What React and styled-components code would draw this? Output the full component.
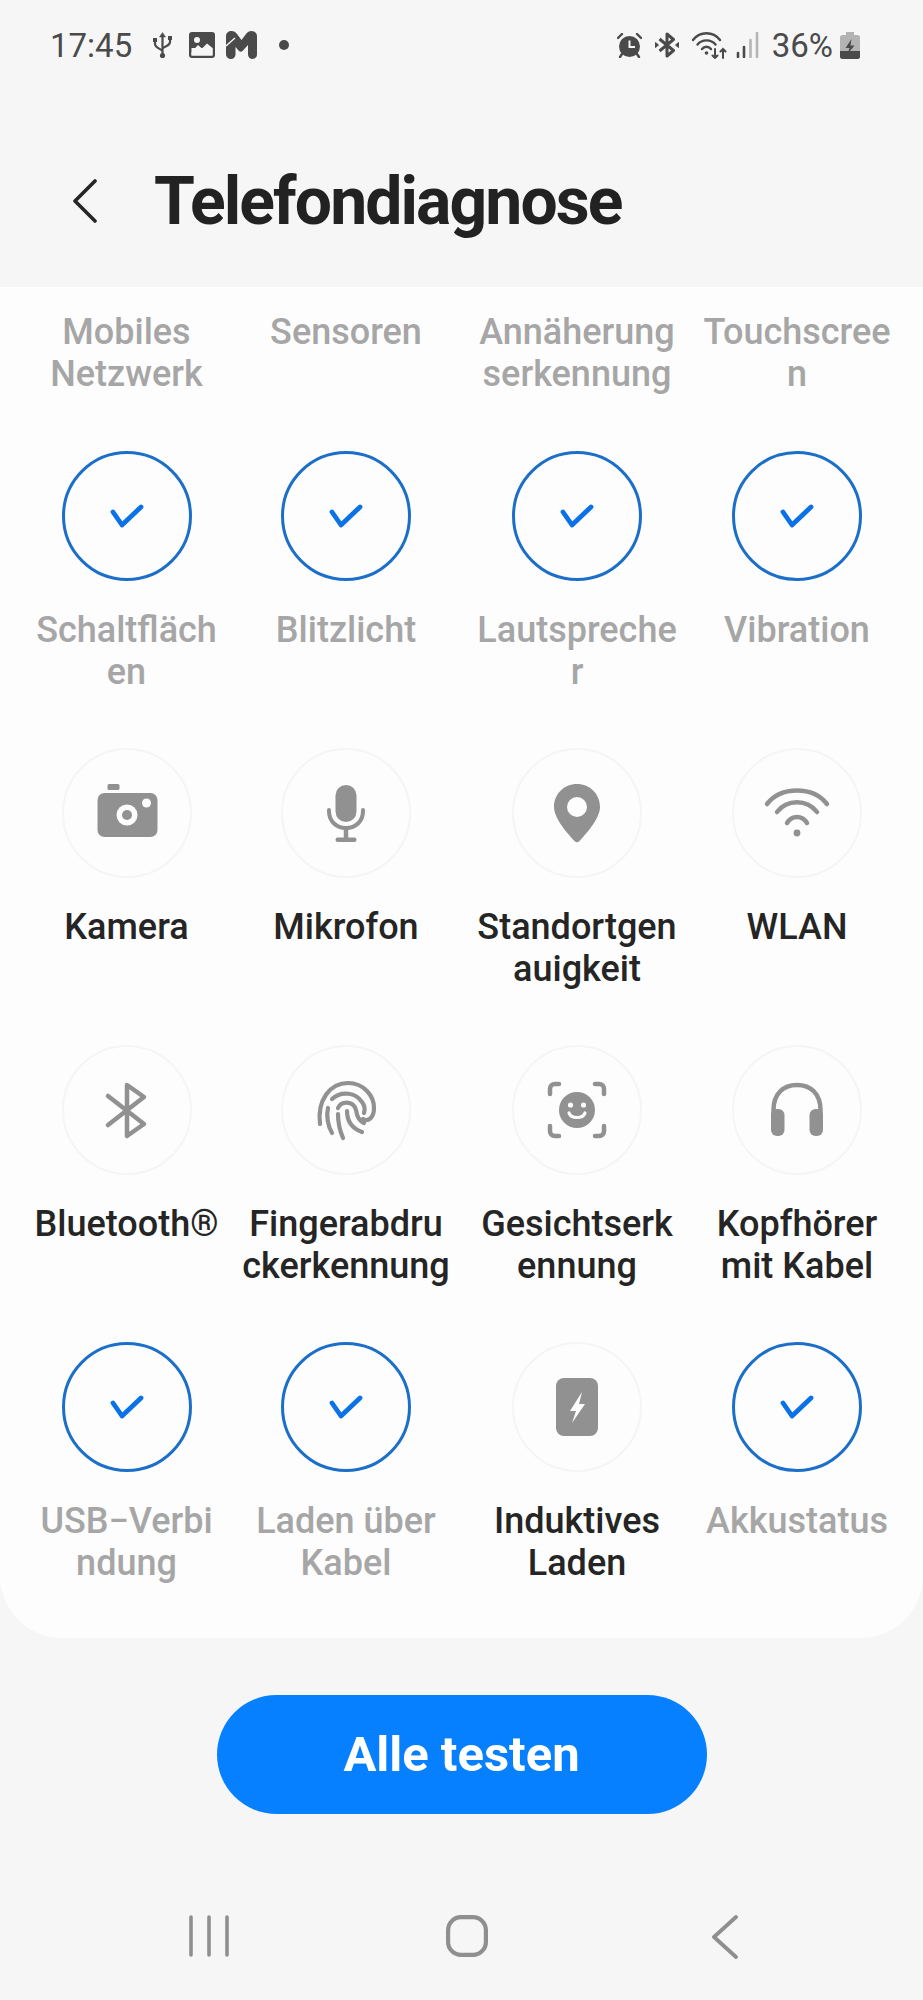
import React from "react";
import styled, { createGlobalStyle } from "styled-components";

const GlobalStyle = createGlobalStyle`
  html, body {
    margin: 0;
    padding: 0;
    background: #f6f6f6;
  }
`;

const Ink = "#919191";

const CameraIcon = () => (
  <svg width="80" height="80" viewBox="0 0 80 80">
    <rect x="20.5" y="11" width="12" height="6" rx="1.5" fill={Ink} />
    <rect x="10.5" y="20" width="60" height="44" rx="7" fill={Ink} />
    <circle cx="40" cy="42" r="10.5" fill="#fdfdfd" />
    <circle cx="40" cy="42" r="5" fill={Ink} />
    <circle cx="59.5" cy="30" r="4.5" fill="#fdfdfd" />
  </svg>
);

const MicIcon = () => (
  <svg width="80" height="80" viewBox="0 0 80 80">
    <rect x="29.5" y="12" width="21" height="37" rx="10.5" fill={Ink} />
    <path d="M23 37 V38 C23 48 30 55 40 55 C50 55 57 48 57 38 V37" fill="none" stroke={Ink} strokeWidth="4" strokeLinecap="round" />
    <path d="M40 55 V66" stroke={Ink} strokeWidth="4.5" />
    <rect x="29.5" y="64.5" width="21" height="4.5" rx="2.2" fill={Ink} />
  </svg>
);

const PinIcon = () => (
  <svg width="80" height="80" viewBox="0 0 80 80">
    <path d="M40 11 C53 11 63 21 63 34 C63 46 48 62 42 68.5 C41 69.5 39 69.5 38 68.5 C32 62 17 46 17 34 C17 21 27 11 40 11 Z" fill={Ink} />
    <circle cx="40" cy="34" r="10" fill="#fdfdfd" />
  </svg>
);

const WifiIcon = () => (
  <svg width="80" height="80" viewBox="0 0 80 80" fill="none" stroke={Ink} strokeWidth="4.5" strokeLinecap="round">
    <path d="M10 31 C24 13 56 13 70 31" />
    <path d="M20 39 C30 26 50 26 60 39" />
    <path d="M30 50 C35 42 45 42 50 50" />
    <circle cx="40" cy="60" r="3.4" fill={Ink} stroke="none" />
  </svg>
);

const BluetoothIcon = () => (
  <svg width="80" height="80" viewBox="0 0 80 80" fill="none" stroke={Ink} strokeWidth="4.5" strokeLinecap="round" strokeLinejoin="round">
    <path d="M21 26 L57 54 L40 66 V15 L57 27 L21 55" />
  </svg>
);

const FingerprintIcon = () => (
  <svg width="80" height="80" viewBox="0 0 80 80" fill="none" stroke={Ink} strokeWidth="4.2" strokeLinecap="round">
    <path d="M14 54 C11 30 24 13 42 13 C58 13 68 26 68 38 C68 48 62 52 57 49" />
    <path d="M26 29 C36 20 50 23 56 32 C59 36 59 40 58 43" />
    <path d="M22 38 C20 46 22 56 26 63" />
    <path d="M32 38 C35 31 47 30 50 40 C51 47 53 51 58 53" />
    <path d="M41 41 C41 51 45 58 56 62" />
    <path d="M32 44 C32 53 34 61 37 68" />
  </svg>
);

const FaceIcon = () => (
  <svg width="80" height="80" viewBox="0 0 80 80" fill="none" stroke={Ink} strokeWidth="4.5" strokeLinecap="round">
    <path d="M13 24 V19 C13 16 15 14 18 14 H22" />
    <path d="M58 14 H62 C65 14 67 16 67 19 V24" />
    <path d="M13 56 V61 C13 64 15 66 18 66 H22" />
    <path d="M58 66 H62 C65 66 67 64 67 61 V56" />
    <circle cx="40" cy="40" r="18" fill={Ink} stroke="none" />
    <circle cx="33.5" cy="35" r="2.6" fill="#fdfdfd" stroke="none" />
    <circle cx="46.5" cy="35" r="2.6" fill="#fdfdfd" stroke="none" />
    <path d="M32 43 C34 49 46 49 48 43" stroke="#fdfdfd" strokeWidth="3.2" />
  </svg>
);

const HeadphonesIcon = () => (
  <svg width="80" height="80" viewBox="0 0 80 80">
    <path d="M16.5 46 V40 C16.5 24 26 15 40 15 C54 15 63.5 24 63.5 40 V46" fill="none" stroke={Ink} strokeWidth="4.5" />
    <rect x="14" y="39" width="13.5" height="27" rx="6" fill={Ink} />
    <rect x="52.5" y="39" width="13.5" height="27" rx="6" fill={Ink} />
  </svg>
);

const ChargeIcon = () => (
  <svg width="80" height="80" viewBox="0 0 80 80">
    <rect x="19" y="11" width="42" height="58" rx="8" fill={Ink} />
    <path d="M45 25 L33 44 H39 L35 56 L48 37 H42 Z" fill="#fdfdfd" />
  </svg>
);

const tests = [
  { lines: ["Mobiles", "Netzwerk"], state: "done", noCircle: true },
  { lines: ["Sensoren"], state: "done", noCircle: true },
  { lines: ["Annäherung", "serkennung"], state: "done", noCircle: true },
  { lines: ["Touchscree", "n"], state: "done", noCircle: true },
  { lines: ["Schaltfläch", "en"], state: "done" },
  { lines: ["Blitzlicht"], state: "done" },
  { lines: ["Lautspreche", "r"], state: "done" },
  { lines: ["Vibration"], state: "done" },
  { lines: ["Kamera"], icon: CameraIcon },
  { lines: ["Mikrofon"], icon: MicIcon },
  { lines: ["Standortgen", "auigkeit"], icon: PinIcon },
  { lines: ["WLAN"], icon: WifiIcon },
  { lines: ["Bluetooth®"], icon: BluetoothIcon },
  { lines: ["Fingerabdru", "ckerkennung"], icon: FingerprintIcon },
  { lines: ["Gesichtserk", "ennung"], icon: FaceIcon },
  { lines: ["Kopfhörer", "mit Kabel"], icon: HeadphonesIcon },
  { lines: ["USB−Verbi", "ndung"], state: "done" },
  { lines: ["Laden über", "Kabel"], state: "done" },
  { lines: ["Induktives", "Laden"], icon: ChargeIcon },
  { lines: ["Akkustatus"], state: "done" },
];

export default function App() {
  return (
    <Page>
      <GlobalStyle />
      <StatusBar>
        <StatusGroup>
          <StatusText>17:45</StatusText>
          <StatusGlyph $left={21}>
            <svg width="19" height="27" viewBox="0 0 19 27" fill="none" stroke="#4a4a4a" strokeWidth="2.2">
              <path d="M9.5 3 V23" />
              <path d="M6.5 5 L9.5 0.5 L12.5 5 Z" fill="#4a4a4a" strokeWidth="0.5" />
              <circle cx="9.5" cy="23.5" r="2.6" fill="#4a4a4a" stroke="none" />
              <path d="M2 9 V12 C2 15 5 16 9.5 18.5" />
              <path d="M17 7 V10 C17 13 14 14 9.5 16" />
              <rect x="0" y="6" width="4" height="4" fill="#4a4a4a" stroke="none" />
              <rect x="15" y="4" width="4" height="4" fill="#4a4a4a" stroke="none" />
            </svg>
          </StatusGlyph>
          <StatusGlyph $left={17}>
            <svg width="26" height="26" viewBox="0 0 26 26">
              <rect width="26" height="26" rx="3" fill="#4a4a4a" />
              <rect x="2.5" y="16" width="21" height="7.5" fill="#f6f6f6" />
              <path d="M2.5 20 L9 13 L13 16.5 L18 11.5 L23.5 16 V23.5 H2.5 Z" fill="#f6f6f6" />
              <circle cx="8" cy="8" r="3" fill="#f6f6f6" />
            </svg>
          </StatusGlyph>
          <StatusGlyph $left={11}>
            <svg width="31" height="28" viewBox="0 0 31 28" fill="#4a4a4a">
              <path d="M0 5 C0 2 2.5 0 5.5 0 C8 0 9.5 1 11 3 L15.5 9 L20 3 C21.5 1 23 0 25.5 0 C28.5 0 31 2 31 5 V23.5 C31 26 29 28 26.5 28 C24 28 22 26 22 23.5 V14 L16.5 20 C15.5 21 14 21 13 20 L9.5 16 V23.5 C9.5 26 7.5 28 5 28 C2.5 28 0 26 0 23.5 Z" />
              <path d="M0 15 L9 7" stroke="#f6f6f6" strokeWidth="1.4" />
            </svg>
          </StatusGlyph>
          <StatusDot />
        </StatusGroup>
        <StatusGroup>
          <StatusGlyph>
            <svg width="25" height="25" viewBox="0 0 25 25">
              <circle cx="12.5" cy="13.5" r="10.5" fill="#4a4a4a" />
              <path d="M12.5 7.5 V14 H18" fill="none" stroke="#f6f6f6" strokeWidth="2" />
              <path d="M1 5 L5 1 M24 5 L20 1 M5 21 L3 24 M20 21 L22 24" stroke="#4a4a4a" strokeWidth="2.4" strokeLinecap="round" />
            </svg>
          </StatusGlyph>
          <StatusGlyph $left={13}>
            <svg width="24" height="26" viewBox="0 0 24 26" fill="none" stroke="#4a4a4a" strokeWidth="3" strokeLinejoin="round">
              <path d="M4.5 7 L18.5 18.5 L12 24 V2 L18.5 7.5 L4.5 19" />
              <path d="M0.5 10.5 L3.5 13 L0.5 15.5 Z M23.5 10.5 L20.5 13 L23.5 15.5 Z" fill="#4a4a4a" strokeWidth="1" />
            </svg>
          </StatusGlyph>
          <StatusGlyph $left={13}>
            <svg width="35" height="27" viewBox="0 0 35 27" fill="none" stroke="#4a4a4a" strokeWidth="2.4" strokeLinecap="round">
              <path d="M1 8 C8 -1 21 -1 28 8" />
              <path d="M5.5 12.5 C10 7 19 7 23.5 12.5" />
              <path d="M10 17 C12.5 14 16.5 14 19 17" />
              <circle cx="14.5" cy="21" r="1.8" fill="#4a4a4a" stroke="none" />
              <path d="M23 17 V26 M20.5 23.5 L23 26 L25.5 23.5 M31 26 V17 M28.5 19.5 L31 17 L33.5 19.5" strokeWidth="2" />
            </svg>
          </StatusGlyph>
          <StatusGlyph $left={9}>
            <svg width="23" height="26" viewBox="0 0 23 26" strokeLinecap="round" strokeWidth="2.6" fill="none">
              <path d="M2 25 V21" stroke="#4a4a4a" />
              <path d="M8 25 V15" stroke="#4a4a4a" />
              <path d="M14.5 25 V8" stroke="#b5b5b5" />
              <path d="M21 25 V1" stroke="#b5b5b5" />
            </svg>
          </StatusGlyph>
          <StatusText $left={13}>36%</StatusText>
          <StatusGlyph $left={7}>
            <svg width="20" height="27" viewBox="0 0 20 27">
              <rect x="6" y="0" width="8" height="3" fill="#b3b3b3" />
              <rect x="0" y="3" width="20" height="24" rx="2.5" fill="#b3b3b3" />
              <path d="M0 19 H20 V24.5 C20 26 19 27 17.5 27 H2.5 C1 27 0 26 0 24.5 Z" fill="#4a4a4a" />
              <path d="M11.5 7 L5.5 16 H9.5 L7.5 22 L14.5 13.5 H10.5 Z" fill="#4a4a4a" />
            </svg>
          </StatusGlyph>
        </StatusGroup>
      </StatusBar>

      <Header>
        <BackButton>
          <svg width="24" height="44" viewBox="0 0 24 44" fill="none" stroke="#252525" strokeWidth="3.6" strokeLinecap="round" strokeLinejoin="round">
            <path d="M22 2 L2 22 L22 42" />
          </svg>
        </BackButton>
        <Title>Telefondiagnose</Title>
      </Header>

      <Card>
        <Grid>
          {tests.map((t) => (
            <Cell key={t.lines.join("")} $headless={t.noCircle}>
              {!t.noCircle && (
                <Circle $done={t.state === "done"}>
                  {t.state === "done" ? (
                    <svg width="34" height="24" viewBox="0 0 34 24" fill="none" stroke="#0a72e6" strokeWidth="4.8" strokeLinecap="round" strokeLinejoin="round">
                      <path d="M3 8 L12 21 L31 3" />
                    </svg>
                  ) : (
                    <t.icon />
                  )}
                </Circle>
              )}
              <Label $done={t.state === "done"}>
                {t.lines.map((l) => (
                  <span key={l}>{l}</span>
                ))}
              </Label>
            </Cell>
          ))}
        </Grid>
      </Card>

      <Actions>
        <TestAll>Alle testen</TestAll>
      </Actions>

      <NavBar>
        <NavSlot>
          <svg width="40" height="42" viewBox="0 0 40 42" stroke="#8f8f8f" strokeWidth="3.6" strokeLinecap="round">
            <path d="M2 2 V40 M20 2 V40 M38 2 V40" />
          </svg>
        </NavSlot>
        <NavSlot>
          <svg width="42" height="42" viewBox="0 0 42 42" fill="none" stroke="#8f8f8f" strokeWidth="4.2">
            <rect x="2.1" y="2.1" width="37.8" height="37.8" rx="13" />
          </svg>
        </NavSlot>
        <NavSlot>
          <svg width="26" height="44" viewBox="0 0 26 44" fill="none" stroke="#8f8f8f" strokeWidth="3.8" strokeLinecap="round" strokeLinejoin="round">
            <path d="M24 2 L2 22 L24 42" />
          </svg>
        </NavSlot>
      </NavBar>
    </Page>
  );
}

const Page = styled.div`
  width: 923px;
  height: 2000px;
  background: #f6f6f6;
  font-family: Roboto, "Noto Sans", sans-serif;
  display: flex;
  flex-direction: column;
  overflow: hidden;
`;

const StatusBar = styled.div`
  height: 90px;
  box-sizing: border-box;
  padding: 0 63px 0 50px;
  display: flex;
  align-items: center;
  justify-content: space-between;
`;

const StatusGroup = styled.div`
  display: flex;
  align-items: center;
`;

const StatusText = styled.span`
  font-size: 33px;
  color: #4a4a4a;
  margin-left: ${(p) => p.$left || 0}px;
`;

const StatusGlyph = styled.span`
  display: flex;
  margin-left: ${(p) => p.$left || 0}px;
`;

const StatusDot = styled.span`
  width: 10px;
  height: 10px;
  border-radius: 50%;
  background: #4a4a4a;
  margin-left: 22px;
`;

const Header = styled.header`
  height: 197px;
  box-sizing: border-box;
  padding: 25px 0 0 73px;
  display: flex;
  align-items: center;
`;

const BackButton = styled.span`
  display: flex;
  width: 81px;
`;

const Title = styled.h1`
  margin: 0;
  font-size: 66px;
  font-weight: 700;
  color: #222;
  letter-spacing: -1.9px;
`;

const Card = styled.main`
  background: #fdfdfd;
  border-radius: 0 0 62px 62px;
  padding: 24px 17px 54px 27px;
  height: 1351px;
  box-sizing: border-box;
`;

const Grid = styled.div`
  display: grid;
  grid-template-columns: 199px 240px 222px 218px;
  row-gap: 55px;
`;

const Cell = styled.div`
  display: flex;
  flex-direction: column;
  align-items: center;
  margin-bottom: ${(p) => (p.$headless ? "1px" : "0")};
`;

const Circle = styled.div`
  width: 130px;
  height: 130px;
  box-sizing: border-box;
  border-radius: 50%;
  border: ${(p) => (p.$done ? "3px solid #1c6fc9" : "2px solid #f5f5f5")};
  margin-bottom: 28px;
  display: flex;
  align-items: center;
  justify-content: center;
`;

const Label = styled.div`
  height: 84px;
  font-size: 36px;
  line-height: 42px;
  font-weight: 500;
  color: ${(p) => (p.$done ? "#a6a6a6" : "#252525")};
  text-align: center;
  white-space: nowrap;
  display: flex;
  flex-direction: column;
`;

const Actions = styled.div`
  display: flex;
  justify-content: center;
  padding-top: 57px;
`;

const TestAll = styled.button`
  width: 490px;
  height: 119px;
  border: none;
  border-radius: 60px;
  background: #0680ff;
  color: #fff;
  font-family: inherit;
  font-size: 49px;
  font-weight: 700;
`;

const NavBar = styled.nav`
  display: grid;
  grid-template-columns: repeat(3, 258px);
  justify-content: center;
  padding: 101px 0 0 10px;
`;

const NavSlot = styled.div`
  display: flex;
  justify-content: center;
`;
